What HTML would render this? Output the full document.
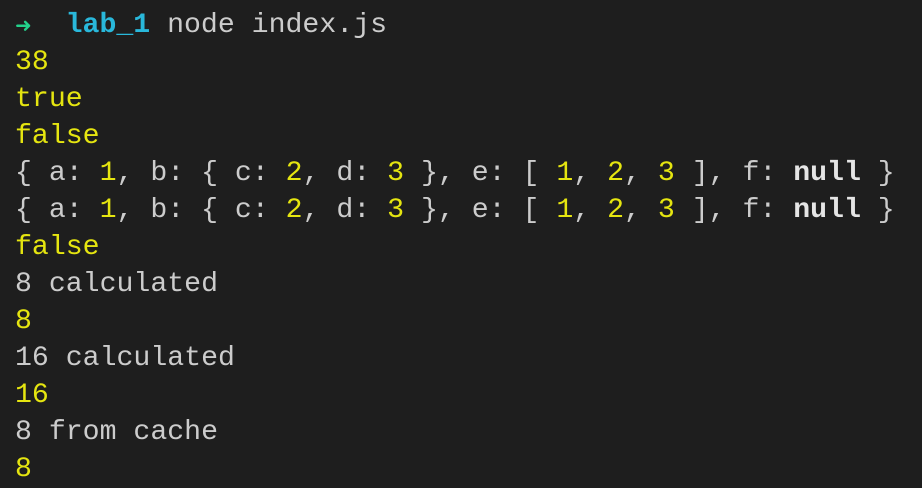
<!DOCTYPE html>
<html><head><style>
html,body{margin:0;padding:0;background:#1e1e1e;width:922px;height:488px;overflow:hidden}
pre{margin:0;padding:7px 0 0 15px;font-family:"Liberation Mono",monospace;font-size:28.2px;line-height:37px;color:#cccccc}
.y{color:#e5e510}.g{color:#23d18b;font-weight:bold;font-family:"DejaVu Sans",sans-serif;font-size:20px}.c{color:#29b8db;font-weight:bold}.b{font-weight:bold;color:#e5e5e5}
</style></head><body><pre><span class="g">➜</span>  <span class="c">lab_1</span> node index.js
<span class="y">38</span>
<span class="y">true</span>
<span class="y">false</span>
{ a: <span class="y">1</span>, b: { c: <span class="y">2</span>, d: <span class="y">3</span> }, e: [ <span class="y">1</span>, <span class="y">2</span>, <span class="y">3</span> ], f: <span class="b">null</span> }
{ a: <span class="y">1</span>, b: { c: <span class="y">2</span>, d: <span class="y">3</span> }, e: [ <span class="y">1</span>, <span class="y">2</span>, <span class="y">3</span> ], f: <span class="b">null</span> }
<span class="y">false</span>
8 calculated
<span class="y">8</span>
16 calculated
<span class="y">16</span>
8 from cache
<span class="y">8</span></pre></body></html>
